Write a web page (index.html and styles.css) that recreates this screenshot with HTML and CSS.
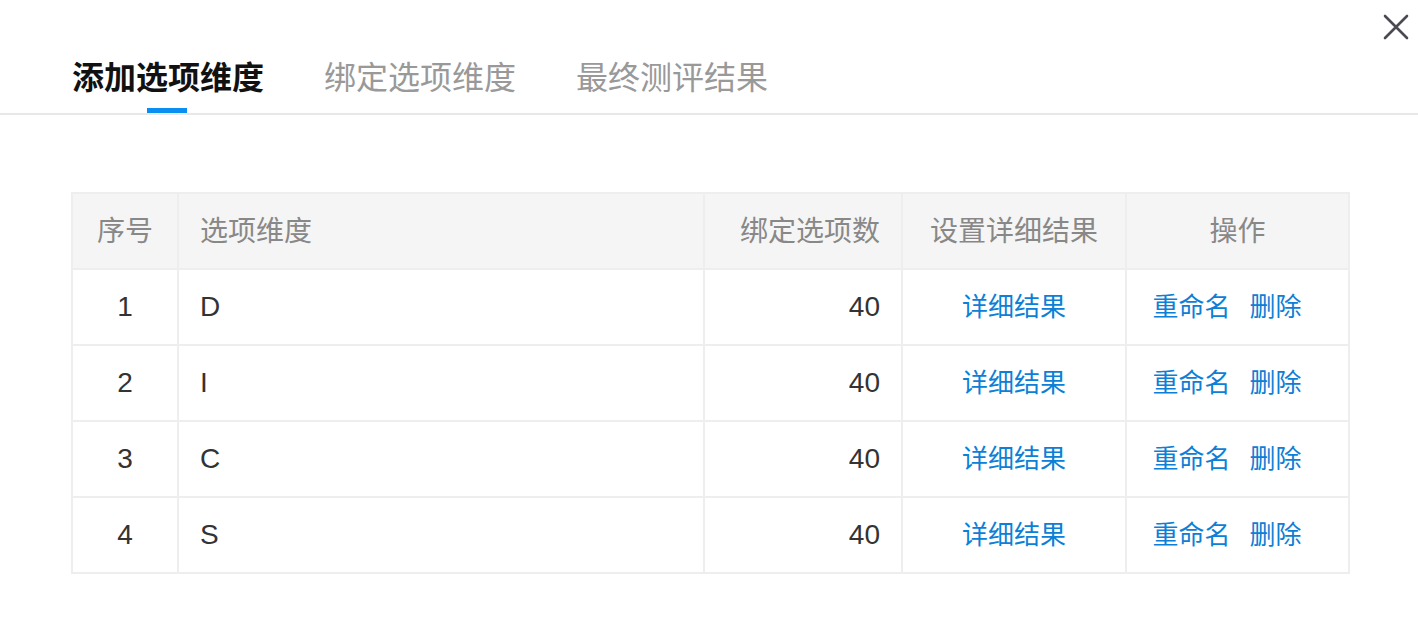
FILE: index.html
```html
<!DOCTYPE html>
<html lang="zh-CN">
<head>
<meta charset="utf-8">
<title>选项维度</title>
<link rel="stylesheet" href="styles.css">
</head>
<body>
<div class="dialog">
  <button class="close" aria-label="关闭">
    <svg width="26" height="26" viewBox="0 0 26 26"><path d="M2 2 L24 24 M24 2 L2 24" stroke="#4a4a55" stroke-width="2.6" stroke-linecap="round" fill="none"/></svg>
  </button>
  <div class="tabs">
    <div class="tab active">添加选项维度</div>
    <div class="tab">绑定选项维度</div>
    <div class="tab">最终测评结果</div>
  </div>
  <div class="content">
    <table class="grid">
      <thead>
        <tr>
          <th class="c-no">序号</th>
          <th class="c-name">选项维度</th>
          <th class="c-count">绑定选项数</th>
          <th class="c-detail">设置详细结果</th>
          <th class="c-ops">操作</th>
        </tr>
      </thead>
      <tbody>
        <tr>
          <td class="c-no">1</td><td class="c-name">D</td><td class="c-count">40</td>
          <td class="c-detail"><a class="link">详细结果</a></td>
          <td class="c-ops"><a class="link">重命名</a><a class="link">删除</a></td>
        </tr>
        <tr>
          <td class="c-no">2</td><td class="c-name">I</td><td class="c-count">40</td>
          <td class="c-detail"><a class="link">详细结果</a></td>
          <td class="c-ops"><a class="link">重命名</a><a class="link">删除</a></td>
        </tr>
        <tr>
          <td class="c-no">3</td><td class="c-name">C</td><td class="c-count">40</td>
          <td class="c-detail"><a class="link">详细结果</a></td>
          <td class="c-ops"><a class="link">重命名</a><a class="link">删除</a></td>
        </tr>
        <tr>
          <td class="c-no">4</td><td class="c-name">S</td><td class="c-count">40</td>
          <td class="c-detail"><a class="link">详细结果</a></td>
          <td class="c-ops"><a class="link">重命名</a><a class="link">删除</a></td>
        </tr>
      </tbody>
    </table>
  </div>
</div>
</body>
</html>
```

FILE: styles.css
```css
* { box-sizing: border-box; }
html, body { margin: 0; padding: 0; background: #fff; }
body {
  font-family: "Liberation Sans", "Noto Sans CJK SC", sans-serif;
  color: #333;
  width: 1418px;
  height: 636px;
  overflow: hidden;
}
.dialog { position: relative; width: 1418px; height: 636px; }
.close {
  position: absolute;
  top: 13px;
  right: 8px;
  width: 28px;
  height: 28px;
  padding: 1px;
  border: 0;
  background: transparent;
  display: flex;
  align-items: center;
  justify-content: center;
}
.tabs {
  display: flex;
  gap: 60px;
  padding-left: 72px;
  height: 115px;
  border-bottom: 2px solid #e8e8e8;
}
.tab {
  position: relative;
  font-family: "Noto Sans CJK SC", sans-serif;
  font-size: 32px;
  line-height: 44px;
  padding-top: 53px;
  color: #999;
}
.tab.active { color: #111; font-weight: 700; }
.tab.active::after {
  content: "";
  position: absolute;
  left: 50%;
  bottom: 0;
  width: 40px;
  height: 5px;
  margin-left: -21px;
  background: #0a8ff0;
}
.content { padding: 77px 0 0 71px; }
.grid {
  width: 1279px;
  table-layout: fixed;
  border-collapse: separate;
  border-spacing: 0;
  border-top: 2px solid #eeeeee;
  border-left: 2px solid #eeeeee;
  font-size: 28px;
}
.grid th, .grid td {
  height: 76px;
  padding: 0 21px;
  border-right: 2px solid #eeeeee;
  border-bottom: 2px solid #eeeeee;
  vertical-align: middle;
  white-space: nowrap;
}
.grid th {
  background: #f5f5f5;
  color: #888;
  font-weight: 400;
  font-family: "Noto Sans CJK SC", sans-serif;
  text-align: left;
  padding-bottom: 4px;
}
.grid td { color: #333; }
.c-no { width: 106px; text-align: center !important; padding-left: 0 !important; padding-right: 0 !important; }
.c-name { width: 526px; }
.c-count { width: 198px; text-align: right !important; }
.c-detail { width: 224px; text-align: center !important; }
.c-ops { text-align: center !important; padding-left: 0 !important; padding-right: 0 !important; }
.link {
  color: #0b80d6;
  font-family: "Noto Sans CJK SC", sans-serif;
  font-size: 26px;
  text-decoration: none;
  cursor: pointer;
  position: relative;
  top: -3px;
}
.c-ops .link:first-child { margin-right: 19px; }
.c-ops .link + .link { margin-right: 21px; }
```
